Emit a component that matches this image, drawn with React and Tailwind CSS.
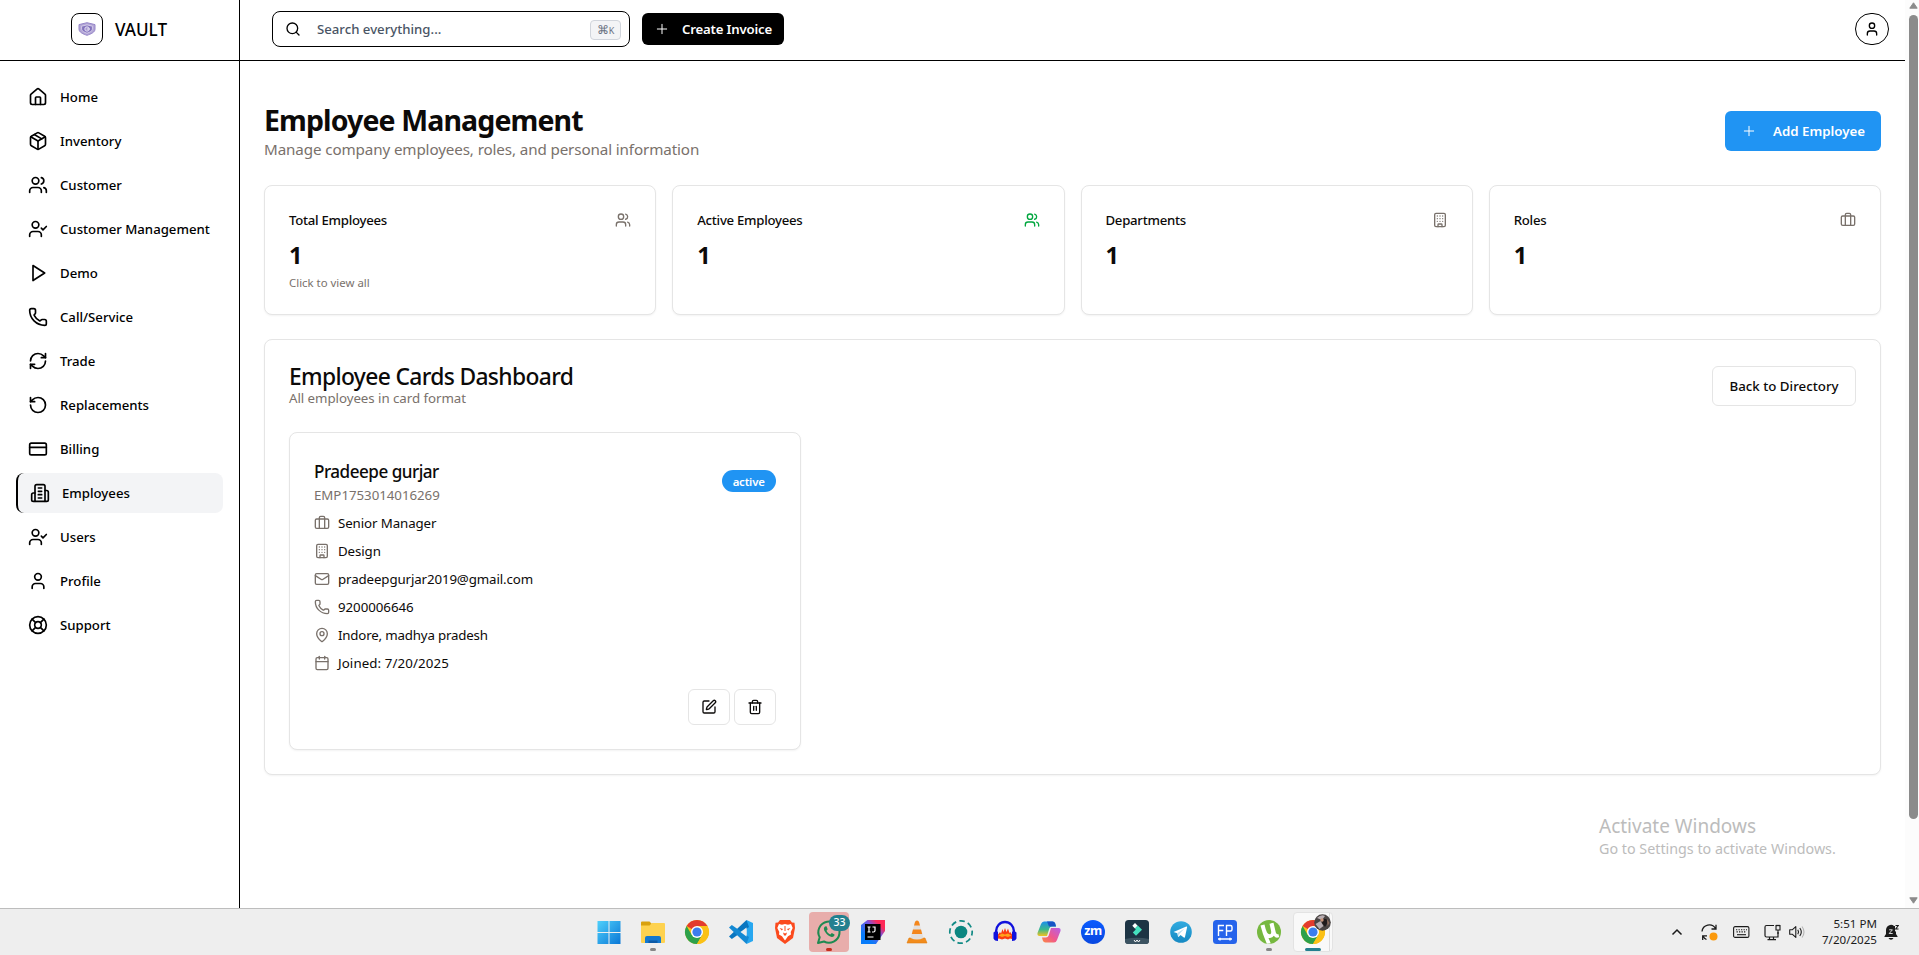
import {
  Briefcase, Building, Calendar, CreditCard, House, LifeBuoy, Mail, MapPin, Package, Phone,
  Plus, RefreshCw, RotateCcw, Search, SquarePen, Trash2, User, UserCheck, Users,
} from "lucide-react";

function Stroke({ children, className }) {
  return (
    <svg viewBox="0 0 24 24" fill="none" stroke="currentColor" strokeWidth="2" strokeLinecap="round" strokeLinejoin="round" className={className}>
      {children}
    </svg>
  );
}

const PlayIcon = ({ className }) => (
  <Stroke className={className}><polygon points="6 3 20 12 6 21 6 3" /></Stroke>
);

const OfficeIcon = ({ className }) => (
  <Stroke className={className}>
    <path d="M6 22V4a2 2 0 0 1 2-2h8a2 2 0 0 1 2 2v18Z" />
    <path d="M6 12H4a2 2 0 0 0-2 2v6a2 2 0 0 0 2 2h2" />
    <path d="M18 9h2a2 2 0 0 1 2 2v9a2 2 0 0 1-2 2h-2" />
    <path d="M10 6h4M10 10h4M10 14h4M10 18h4" />
  </Stroke>
);

const navItems = [
  ["Home", House], ["Inventory", Package], ["Customer", Users], ["Customer Management", UserCheck],
  ["Demo", PlayIcon], ["Call/Service", Phone], ["Trade", RefreshCw], ["Replacements", RotateCcw],
  ["Billing", CreditCard], ["Employees", OfficeIcon], ["Users", UserCheck], ["Profile", User], ["Support", LifeBuoy],
];

function Sidebar() {
  return (
    <aside className="flex w-60 shrink-0 flex-col border-r border-black">
      <div className="flex h-[61px] shrink-0 items-center justify-center border-b border-black pr-px pb-[2px]">
        <div className="flex size-8 items-center justify-center rounded-lg border border-black">
          <svg viewBox="0 0 18 14" className="h-[14px] w-[18px]">
            <path d="M1 2.600 9 .7l8 1.900v4.600c0 3-4.200 4.900-8 6.100C5.200 12.100 1 10.200 1 7.200Z" fill="#b3a6d6" stroke="#9585c8" strokeWidth="1" />
            <path d="M3.600 4.200 9 2.900l5.400 1.300v3c0 1.900-2.800 3.100-5.400 4-2.600-.9-5.400-2.100-5.400-4Z" fill="#8373bd" stroke="#ded8ef" strokeWidth=".8" />
            <circle cx="9" cy="7" r="2.200" fill="#a99bd2" stroke="#e8e3f5" strokeWidth=".9" />
            <path d="M9 7h3" stroke="#e8e3f5" strokeWidth=".9" />
          </svg>
        </div>
        <span className="ml-3 pt-[2px] text-[17.100px] leading-7 font-medium text-black">VAULT</span>
      </div>
      <nav className="flex flex-col gap-1 px-4 pt-4">
        {navItems.map(([label, Icon]) => (
          <div
            key={label}
            className={
              label === "Employees"
                ? "flex h-10 items-center gap-3 rounded-lg border-l-2 border-black bg-gray-100 px-3"
                : "flex h-10 items-center gap-3 rounded-lg px-3"
            }
          >
            <Icon className="size-5 shrink-0 text-black" />
            <span className="text-[13.200px] leading-5 font-medium whitespace-nowrap text-black">{label}</span>
          </div>
        ))}
      </nav>
    </aside>
  );
}

function Header() {
  return (
    <header className="flex h-[61px] shrink-0 items-center border-b border-black pr-4 pb-[2px] pl-8">
      <div className="flex h-9 w-[358px] items-center rounded-lg border border-black pr-2 pl-3">
        <Search className="size-4 text-black" />
        <span className="ml-4 pt-px text-[13.200px] font-medium text-gray-600">Search everything...</span>
        <span className="mt-[2px] ml-auto flex h-5 w-[31px] items-center justify-center rounded border border-gray-300 bg-gray-100 text-[12px] text-gray-500">
          ⌘<span className="pt-px text-[9px]">K</span>
        </span>
      </div>
      <button className="ml-3 flex h-8 w-[142px] items-center rounded-md bg-black pl-3 text-white">
        <Plus className="size-4" strokeWidth={1.5} />
        <span className="ml-3 pt-[2px] text-[13.200px] font-semibold tracking-[-0.18px] whitespace-nowrap">Create Invoice</span>
      </button>
      <div className="ml-auto flex h-8 w-[34px] items-center justify-center rounded-full border border-black">
        <User className="size-4 text-black" />
      </div>
    </header>
  );
}

const stats = [
  { label: "Total Employees", Icon: Users, color: "size-4 text-stone-500", note: "Click to view all" },
  { label: "Active Employees", Icon: Users, color: "size-4 text-green-600" },
  { label: "Departments", Icon: Building, color: "size-4 text-stone-500" },
  { label: "Roles", Icon: Briefcase, color: "size-4 text-stone-500" },
];

function StatCard({ label, Icon, color, note }) {
  return (
    <div className="h-[130px] rounded-lg border border-[#e5e5e5] bg-white p-6 shadow-[0_1px_2px_rgba(0,0,0,0.05)]">
      <div className="flex h-5 items-center justify-between">
        <span className="text-[13.200px] leading-5 font-medium tracking-[-0.27px]">{label}</span>
        <Icon className={color} />
      </div>
      <div className="mt-[9px] text-[23.500px] leading-8 font-bold">1</div>
      {note && <div className="mt-1 text-[11.400px] leading-4 text-stone-500">{note}</div>}
    </div>
  );
}

const details = [
  { text: "Senior Manager", Icon: Briefcase, cls: "tracking-[-0.1px]" },
  { text: "Design", Icon: Building, cls: "tracking-[-0.1px]" },
  { text: "pradeepgurjar2019@gmail.com", Icon: Mail, cls: "tracking-[-0.12px]" },
  { text: "9200006646", Icon: Phone, cls: "tracking-[-0.05px]" },
  { text: "Indore, madhya pradesh", Icon: MapPin, cls: "tracking-[-0.18px]" },
  { text: "Joined: 7/20/2025", Icon: Calendar, cls: "tracking-[0.1px]" },
];

function EmployeeCard() {
  return (
    <div className="flex flex-col rounded-lg border border-[#e5e5e5] bg-white p-6 shadow-[0_1px_2px_rgba(0,0,0,0.05)]">
      <div className="flex h-12 items-center justify-between">
        <div>
          <h3 className="pt-px text-[17.100px] leading-7 font-medium tracking-[-0.5px]">Pradeepe gurjar</h3>
          <p className="-mt-px text-[13.300px] leading-5 tracking-[-0.04px] text-stone-500">EMP1753014016269</p>
        </div>
        <span className="flex h-[22px] w-[54px] items-center justify-center rounded-full bg-[#2094f3] pt-px text-[11.400px] font-semibold tracking-[-0.18px] text-white">active</span>
      </div>
      <div className="mt-2 flex flex-col gap-2">
        {details.map(({ text, Icon, cls }) => (
          <div key={text} className="flex h-5 items-center gap-2 text-[13.300px] leading-5">
            <Icon className="size-4 text-stone-500" />
            <span className={cls}>{text}</span>
          </div>
        ))}
      </div>
      <div className="mt-4 flex justify-end gap-1">
        <button className="flex h-9 w-[42px] items-center justify-center rounded-md border border-[#e5e5e5]"><SquarePen className="size-4" /></button>
        <button className="flex h-9 w-[42px] items-center justify-center rounded-md border border-[#e5e5e5]"><Trash2 className="size-4" /></button>
      </div>
    </div>
  );
}

function Main() {
  return (
    <main className="flex grow flex-col gap-6 px-6 pt-10 text-stone-950">
      <div className="flex h-[60px] items-center justify-between">
        <div>
          <h1 className="pt-px text-[28.500px] leading-9 font-bold tracking-[-0.88px]">Employee Management</h1>
          <p className="-mt-px text-[15.200px] leading-6 tracking-[-0.12px] text-stone-500">Manage company employees, roles, and personal information</p>
        </div>
        <button className="flex h-10 w-[156px] items-center rounded-md bg-[#2094f3] pl-4 text-white">
          <Plus className="size-4" strokeWidth={1.5} />
          <span className="ml-4 pt-[2px] text-[13.300px] font-semibold whitespace-nowrap">Add Employee</span>
        </button>
      </div>
      <div className="grid grid-cols-4 gap-4">
        {stats.map((s) => <StatCard key={s.label} {...s} />)}
      </div>
      <section className="rounded-lg border border-[#e5e5e5] bg-white p-6 shadow-[0_1px_2px_rgba(0,0,0,0.05)]">
        <div className="flex h-11 items-center justify-between">
          <div>
            <h2 className="pt-px text-[22.800px] leading-6 font-medium tracking-[-0.64px]">Employee Cards Dashboard</h2>
            <p className="-mt-px text-[13.300px] leading-5 tracking-[-0.05px] text-stone-500">All employees in card format</p>
          </div>
          <button className="flex h-10 w-36 items-center justify-center rounded-md border border-[#e5e5e5] pt-[2px] text-[13.300px] font-medium">Back to Directory</button>
        </div>
        <div className="mt-6 grid grid-cols-3 gap-4">
          <EmployeeCard />
        </div>
      </section>
    </main>
  );
}

function Scrollbar() {
  return (
    <div className="flex w-[14px] shrink-0 flex-col items-center bg-[#fcfcfc] pt-[2px] pb-1 pl-[2px]">
      <svg viewBox="0 0 9 7" className="h-[7px] w-[9px] shrink-0"><path d="M4.500 .8 8.200 6.200H.8Z" fill="#8b8b8b" stroke="#8b8b8b" strokeLinejoin="round" /></svg>
      <div className="mt-[6px] h-[804px] w-[9px] shrink-0 rounded-full bg-[#8b8b8b]" />
      <svg viewBox="0 0 9 7" className="mt-auto h-[7px] w-[9px] shrink-0"><path d="M4.500 6.200.8.8h7.400Z" fill="#8b8b8b" stroke="#8b8b8b" strokeLinejoin="round" /></svg>
    </div>
  );
}

function App24({ children }) {
  return <svg viewBox="0 0 24 24" className="size-6 shrink-0 overflow-visible">{children}</svg>;
}

const Chrome = () => (
  <App24>
    <circle cx="12" cy="12" r="12" fill="#fbc116" />
    <path d="M12 12 1.600 6A12 12 0 0 1 22.400 6H12Z" fill="#e33b2e" />
    <path d="M1.600 6A12 12 0 0 0 12 24l5.200-9L12 12 6.800 15Z" fill="#2da14b" />
    <path d="M22.400 6H12v6l5.200 3L12 24A12 12 0 0 0 22.400 6Z" fill="#fbc116" />
    <circle cx="12" cy="12" r="6" fill="#fff" />
    <circle cx="12" cy="12" r="4.600" fill="#3b7ded" />
  </App24>
);

const taskbar = [
  <App24>
    <defs><linearGradient id="win" x1="0" y1="0" x2="1" y2="1"><stop offset="0" stopColor="#4fd0fb" /><stop offset="1" stopColor="#0a77d6" /></linearGradient></defs>
    <path d="M.5 1h11v11H.5ZM12.500 1h11v11h-11ZM.5 13h11v11H.5ZM12.500 13h11v11h-11Z" fill="url(#win)" />
  </App24>,
  <App24>
    <path d="M0 2.500Q0 1.500 1 1.500h7.500L11 4h12q1 0 1 1v7H0Z" fill="#d9a10f" />
    <path d="M0 5.500h8.500L11 3h12q1 0 1 1v18q0 1-1 1H1q-1 0-1-1Z" fill="#fed24f" />
    <path d="M4 23v-5q0-2 2-2h12q2 0 2 2v5Z" fill="#1478ce" />
    <path d="M7.500 23v-2.500h9V23Z" fill="#0c5aa6" />
  </App24>,
  <Chrome />,
  <App24>
    <path d="M17.500 0v24L24 21V3Z" fill="#27a7f0" />
    <path d="M17.500 0 20 7 2.800 19 0 16.500Z" fill="#0a76c0" />
    <path d="M17.500 24 20 17 2.800 5 0 7.500Z" fill="#1489d3" />
    <path d="M17.500 7.500v9L11.500 12Z" fill="#eee" />
  </App24>,
  <App24>
    <path d="m7 0h10l2 2.500 2.500.3L22 8l-2 10-8 6-8-6L2 8l.5-5.200L5 2.500Z" fill="#fb4a1d" />
    <path d="m6 4 3 .8 3-.8 3 .8 3-.8 1.700 4-2 4 .3 2.500-3 1.800L12 20.500 9 16.300l-3-1.800.3-2.500-2-4Z" fill="#fff" />
    <path d="m6.500 8 3.500 1-1.200 1.500ZM17.500 8 14 9l1.200 1.500ZM10 12.500l2 1 2-1-1 3h-2ZM11.500 6h1v5h-1Z" fill="#fb4a1d" />
  </App24>,
  <App24>
    <path d="M1 23l1.700-5.700A10.600 10.600 0 1 1 7 21.500Z" fill="none" stroke="#1e8a51" strokeWidth="2" strokeLinejoin="round" />
    <path d="M8 6.500c-1.500 1-1.500 3 0 5.300 1.800 2.800 4 4.600 6.700 5.200 1.500.2 3-1 2.800-2.500l-2.700-1.500-1.500 1.500c-1.700-.8-2.900-2-3.800-3.700l1.200-1.500L9.500 6.300Z" fill="#1e8a51" />
  </App24>,
  <App24>
    <defs><linearGradient id="ij" x1="0" y1="1" x2="1" y2="0"><stop offset=".25" stopColor="#087cfa" /><stop offset=".6" stopColor="#7a55e0" /><stop offset=".8" stopColor="#fe2857" /></linearGradient></defs>
    <path d="M6.500 0H24v11L15 24H0V5Z" fill="url(#ij)" />
    <path d="M4 4h15.500v16H4Z" fill="#000" />
    <path d="M6.500 7h3M8 7v5M6.500 12h3M11.500 7h2.500v3.500q0 1.500-1.500 1.500h-1.500M6.500 17h6" fill="none" stroke="#fff" strokeWidth="1.200" />
  </App24>,
  <App24>
    <path d="M4 18h16l2 5H2Z" fill="#f28c1c" stroke="#e07d10" strokeWidth=".6" />
    <path d="M12 .5q1.500 0 2 1.500l4.500 16q-6.500 3-13 0L10 2q.5-1.500 2-1.500Z" fill="#e2dfdd" />
    <path d="M12 .5q1.500 0 2 1.500l1 3.500H9L10 2q.5-1.500 2-1.500ZM8 9.500h8l1.200 4.500H6.800Z" fill="#f4861b" />
  </App24>,
  <App24>
    <circle cx="12" cy="12" r="11.200" fill="none" stroke="#118a85" strokeWidth="1.700" strokeDasharray="5.500 3.300" strokeDashoffset="2" />
    <circle cx="12" cy="12" r="6.300" fill="#0b8680" />
  </App24>,
  <App24>
    <path d="M3 14V11.500a9 9.500 0 0 1 18 0V14" fill="none" stroke="#1111dc" strokeWidth="2.400" />
    <path d="M5 14.500 7 12l1 1.500L9.500 9l1 3L12 8l1.500 4 1.500-3.500 1.500 4.500.8-1 1.700 2.500V19l-2-.5-2 1-3-1-3 1-3-1-2 .5Z" fill="#fb3c12" />
    <path d="M5.500 15.500l3.500-2 3 1 3-1 3.500 2-3.500 1.500-3-1-3 1Z" fill="#ffa31b" />
    <path d="M.5 12.500Q2 11 5 11.500v9.500Q1.500 21 .5 18.500ZM23.500 12.500Q22 11 19 11.500v9.500q3.500 0 4.500-2.500Z" fill="#1111dc" />
  </App24>,
  <App24>
    <defs>
      <linearGradient id="copA" x1="0" y1="0" x2="0" y2="1"><stop offset="0" stopColor="#1b8fec" /><stop offset=".55" stopColor="#39b98c" /><stop offset="1" stopColor="#f2c21f" /></linearGradient>
      <linearGradient id="copB" x1="1" y1="0" x2="0" y2="1"><stop offset="0" stopColor="#b65fe8" /><stop offset=".55" stopColor="#f0578d" /><stop offset="1" stopColor="#fb8a41" /></linearGradient>
    </defs>
    <path d="M7 1.500h8.500q2 0 2.700 2l.8 3h-4q-2 0-2.700 2l-2.300 7.500H2.500Q0 16 .5 13L4 4Q5 1.500 7 1.500Z" fill="url(#copA)" />
    <path d="M10 1.500h5.500q2 0 2.700 2l.8 3h-7Z" fill="#1754c5" />
    <path d="M17 22.500H8.500q-2 0-2.700-2L5 17.500h4q2 0 2.700-2L14 8h7.500q2.500 0 2 3L20 20q-1 2.500-3 2.500Z" fill="url(#copB)" />
  </App24>,
  <div className="flex size-6 items-center justify-center rounded-full bg-gradient-to-b from-[#0b5cff] to-[#0847e0] pb-[2px] text-[12.500px] leading-none font-bold tracking-[-0.5px] text-white">zm</div>,
  <App24>
    <rect width="24" height="24" rx="3.500" fill="#1d3444" />
    <path d="M0 19q12-2.500 24 0v1.500q0 3.500-3.500 3.500h-17Q0 24 0 20.500Z" fill="#3c5361" />
    <path d="m10 3 2.700 2.700L10 8.400 7.300 5.700Z" fill="#fff" />
    <path d="m12.800 5.500 4.200 4.200-6 6-3.200-3.200 3-3-.9-.9Z" fill="#45e0bd" />
    <path d="m9 20 1.500 2L12 20l1.500 2L15 20" fill="none" stroke="#fff" strokeWidth="1" />
  </App24>,
  <App24>
    <defs><linearGradient id="tg" x1="0" y1="0" x2="0" y2="1"><stop offset="0" stopColor="#31abe0" /><stop offset="1" stopColor="#1689c2" /></linearGradient></defs>
    <circle cx="12" cy="12" r="10.800" fill="url(#tg)" />
    <path d="M4.500 12 17.300 6.500q1-.3.800.8L16 17q-.3 1-1.200.5l-3.300-2.400-1.700 1.600q-.8.500-.9-.5l-.6-3Z" fill="#fff" />
    <path d="m8.500 13 7-4.500-5.200 5.600-.5 2.400Z" fill="#b9dcee" />
  </App24>,
  <App24>
    <rect width="24" height="24" rx="3.500" fill="#2563eb" />
    <path d="M5.500 16V5.500h5.500M5.500 10.500h4.800M13.500 16V5.500h4q1.500 0 1.500 1.500v2.500q0 1.500-1.500 1.500h-4M5 19h14M7 17.800v2.600M17 17.800v2.600" fill="none" stroke="#fff" strokeWidth="1.400" />
  </App24>,
  <App24>
    <circle cx="12" cy="12" r="12" fill="#76b83f" />
    <path d="M3.500 5.500 7.500 4.500q1 5 2.500 8 1.300 2.200 3.200 1.700 1.600-.7.700-4.200L12.500 3.700l4-.9 2.300 9.700q.8 2.300 2.500 1.500l1 3q-3.300 1.800-5.500-1.200-1.500 2.700-5.300 2.100l2.300 5.500-4 .4Q5.500 14 3.500 5.500Z" fill="#fff" />
  </App24>,
  <Chrome />,
];

function TaskIcon({ icon, index }) {
  if (index === 5) {
    return (
      <div className="relative flex h-10 w-10 items-center justify-center rounded bg-[#e8adab]">
        {icon}
        <span className="absolute top-[3px] -right-px flex h-4 w-[21px] items-center justify-center rounded-full bg-[#23808f] text-[10.500px] font-medium text-white">33</span>
        <span className="absolute bottom-px h-[3px] w-[6px] rounded-full bg-[#c42b1c]" />
      </div>
    );
  }
  if (index === 16) {
    return (
      <div className="relative flex h-10 w-10 items-center justify-center rounded border border-[#e3e3e3] bg-[#f9f9f9]">
        <div className="absolute top-0 right-0 h-full w-[3px] border-l border-[#dcdcdc]" />
        {icon}
        <svg viewBox="0 0 17 17" className="absolute top-px right-px size-[17px]">
          <circle cx="8.500" cy="8.500" r="8.300" fill="#4a4544" />
          <path d="M3 4q4-4 8-2l-3 4ZM1.500 10l5-3 3 5-4 3Z" fill="#b8aeb2" />
          <path d="M9 5q4-1 5 3l-3 5-3-4Z" fill="#1f1b1c" />
          <circle cx="8" cy="6" r="1.700" fill="#c8957c" />
          <path d="M13 5l2.500 4-2 3Z" fill="#8b6b5c" />
        </svg>
        <span className="absolute bottom-0 h-[3px] w-4 rounded-full bg-[#23808f]" />
      </div>
    );
  }
  return (
    <div className="relative flex h-10 w-10 items-center justify-center">
      {icon}
      {(index === 1 || index === 15) && <span className="absolute bottom-px h-[3px] w-[6px] rounded-full bg-[#868686]" />}
    </div>
  );
}

function Taskbar() {
  return (
    <footer className="flex h-[47px] shrink-0 items-center border-t border-[#bdbdbd] bg-[#eeeeee] pl-[589px]">
      <div className="flex gap-1">
        {taskbar.map((icon, i) => <TaskIcon key={i} icon={icon} index={i} />)}
      </div>
      <div className="ml-auto flex items-center pr-5 text-[#1b1b1b]">
        <svg viewBox="0 0 12 8" className="h-2 w-3"><path d="m1.500 6.500 4.500-4.500 4.500 4.500" fill="none" stroke="currentColor" strokeWidth="1.500" /></svg>
        <svg viewBox="0 0 17 17" className="ml-[18px] size-[17px]">
          <path d="M1 7.500A7.300 7.300 0 0 1 14.500 4.500M15 .8v4.200h-4.500M5.500 15.500A7.300 7.300 0 0 1 2 12M1.700 16v-4.200H6" fill="none" stroke="currentColor" strokeWidth="1.300" />
          <circle cx="12.500" cy="12.500" r="4" fill="#fb990c" />
        </svg>
        <svg viewBox="0 0 17 12" className="ml-[15px] h-3 w-[17px]">
          <rect x=".6" y=".6" width="15.300" height="10.800" rx="1.500" fill="none" stroke="currentColor" strokeWidth="1.100" />
          <path d="M3 3.700h11M3.500 5.900h10" stroke="currentColor" strokeWidth="1.100" strokeDasharray="1.300 1.200" />
          <path d="M4 8.700h9" stroke="currentColor" strokeWidth="1.100" />
        </svg>
        <svg viewBox="0 0 17 17" className="ml-[14px] size-[17px]">
          <path d="M10 1.500H2.500Q1 1.500 1 3v8.500q0 1.500 1.500 1.500H14V8M5.500 13v2.500M9.500 13v2.500M3.500 15.700h8.500" fill="none" stroke="currentColor" strokeWidth="1.200" />
          <path d="M12 1.500h4v4.500h-4ZM14 6v4M13 .8v1.500M15 .8v1.500" fill="none" stroke="currentColor" strokeWidth="1.100" />
        </svg>
        <svg viewBox="0 0 16 14" className="ml-2 h-[14px] w-4">
          <path d="M.7 4.800h2.500L6.800 1.600v10.800L3.200 9.200H.7Z" fill="none" stroke="currentColor" strokeWidth="1.100" strokeLinejoin="round" />
          <path d="M8.800 4.800q1.500 2.200 0 4.400M10.800 3q3 4 0 8" fill="none" stroke="currentColor" strokeWidth="1.100" />
          <path d="M13 1.500q4 5.500 0 11" fill="none" stroke="#b5b5b5" strokeWidth="1.100" />
        </svg>
        <div className="ml-[15px] w-[57px] text-right text-[11.600px] leading-4">
          <div>5:51 PM</div>
          <div>7/20/2025</div>
        </div>
        <svg viewBox="0 0 15 16" className="ml-[7px] h-4 w-[15px]">
          <path d="M9.500 1.300Q7.800.6 6 1 2.200 2 2 6v4L.5 12.200v.8h13v-.8L12 10V7.500L9 7Z" fill="#1b1b1b" />
          <path d="M8 2h3v8H8Z" fill="#1b1b1b" />
          <path d="M4.500 14h5q-.8 1.800-2.500 1.800T4.500 14Z" fill="#1b1b1b" />
          <path d="M11.500 1.500H14.300L11.700 5H14.500" fill="none" stroke="#1b1b1b" strokeWidth="1.100" />
          <path d="M5.200 5.800h3.200l-3.200 3.700h3.500" fill="none" stroke="#eee" strokeWidth=".9" />
        </svg>
      </div>
    </footer>
  );
}

export default function App() {
  return (
    <div className="relative flex h-[955px] w-[1919px] flex-col overflow-hidden bg-white font-['Noto_Sans','Open_Sans',sans-serif]">
      <div className="flex min-h-0 grow">
        <Sidebar />
        <div className="flex grow flex-col">
          <Header />
          <Main />
        </div>
        <Scrollbar />
      </div>
      <Taskbar />
      <div className="absolute top-[812px] left-[1599px] text-[#bcbcbc]">
        <div className="text-[19px] leading-7">Activate Windows</div>
        <div className="text-[14.300px] leading-[17px]">Go to Settings to activate Windows.</div>
      </div>
    </div>
  );
}
